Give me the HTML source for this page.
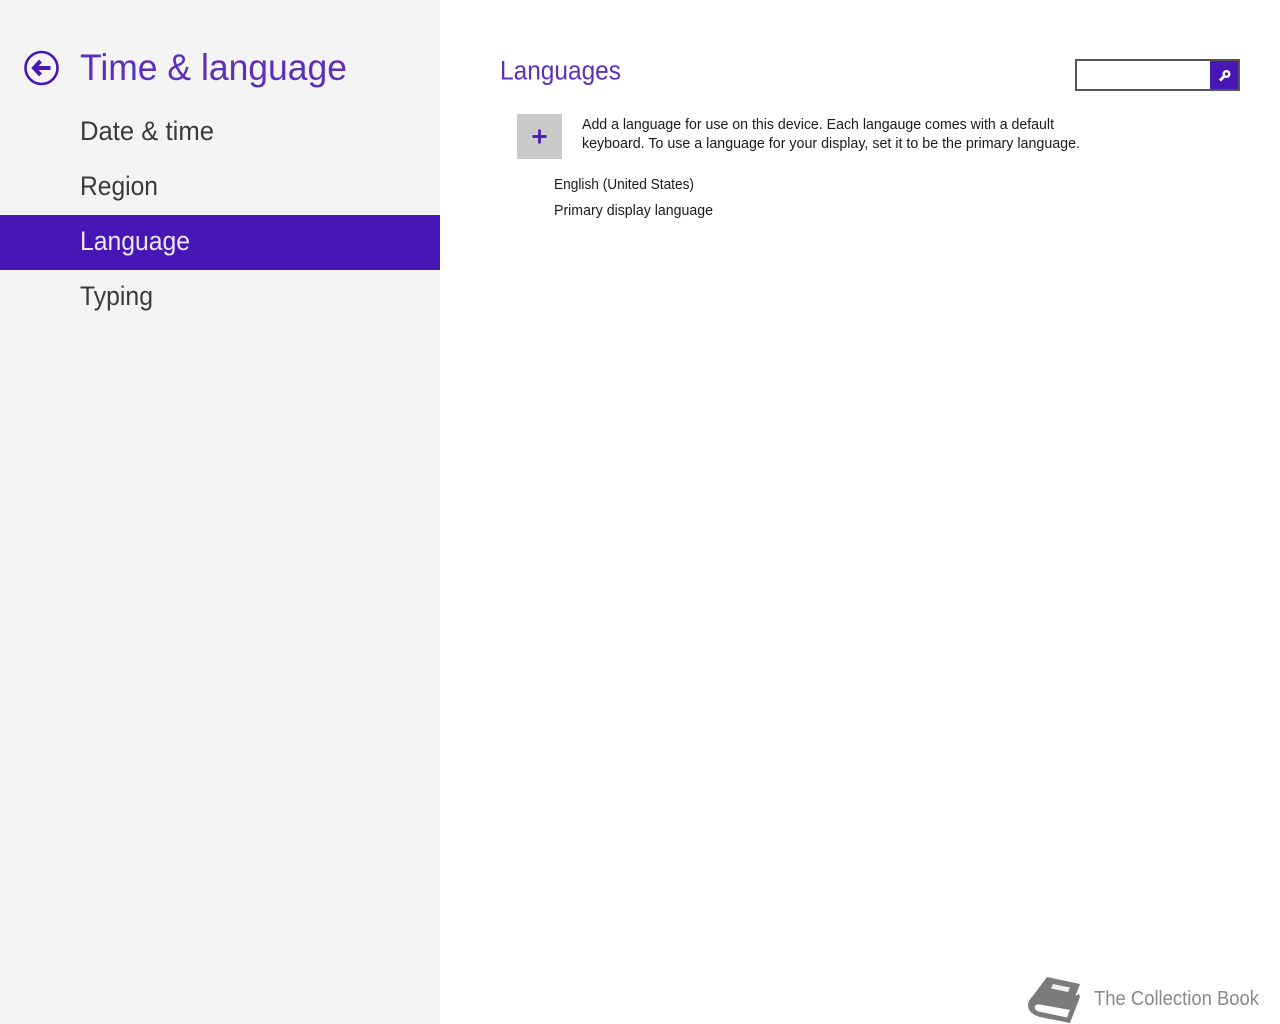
<!DOCTYPE html>
<html lang="en"><head><meta charset="utf-8"><title>Time &amp; language</title>
<style>
html,body{margin:0;padding:0;background:#fff;width:1280px;height:1024px;overflow:hidden}
svg{display:block}
text{font-family:"Liberation Sans",sans-serif}
</style></head><body>
<svg width="1280" height="1024" viewBox="0 0 1280 1024" xmlns="http://www.w3.org/2000/svg">
<rect width="1280" height="1024" fill="#fff"/>
<rect width="440" height="1024" fill="#f4f4f4"/>
<rect y="215" width="440" height="55" fill="#4617b4"/>

<circle cx="41.500" cy="68" r="16" fill="none" stroke="#4617b4" stroke-width="2.600"/>
<path d="M40.500 61L34 68L40.500 75M35 68H50.500" fill="none" stroke="#4617b4" stroke-width="4"/>

<text x="80" y="80" font-size="37" fill="#5a30bc" textLength="267" lengthAdjust="spacingAndGlyphs">Time &amp; language</text>
<text x="80" y="140" font-size="27" fill="#3a3a3a" textLength="134" lengthAdjust="spacingAndGlyphs">Date &amp; time</text>
<text x="80" y="195" font-size="27" fill="#3a3a3a" textLength="78" lengthAdjust="spacingAndGlyphs">Region</text>
<text x="80" y="250" font-size="27" fill="#efe6ff" textLength="110" lengthAdjust="spacingAndGlyphs">Language</text>
<text x="80" y="305" font-size="27" fill="#3a3a3a" textLength="73" lengthAdjust="spacingAndGlyphs">Typing</text>

<text x="500" y="79.500" font-size="27" fill="#5a30bc" textLength="121" lengthAdjust="spacingAndGlyphs">Languages</text>

<rect x="1076" y="60" width="163" height="30" fill="#fff" stroke="#555" stroke-width="2"/>
<rect x="1210" y="61" width="28" height="28" fill="#4617b4"/>
<circle cx="1226.500" cy="74" r="2.800" fill="none" stroke="#fff" stroke-width="2.400"/>
<path d="M1224 76.500L1220 80.500" stroke="#fff" stroke-width="2.800" fill="none"/>

<rect x="517" y="114" width="45" height="45" fill="#cacaca"/>
<path d="M539.500 129.500V143.500M532.500 136.500H546.500" stroke="#4617b4" stroke-width="2.700" fill="none"/>

<text x="582" y="129" font-size="14.500" fill="#1a1a1a" textLength="472" lengthAdjust="spacingAndGlyphs">Add a language for use on this device. Each langauge comes with a default</text>
<text x="582" y="148" font-size="14.500" fill="#1a1a1a" textLength="498" lengthAdjust="spacingAndGlyphs">keyboard. To use a language for your display, set it to be the primary language.</text>
<text x="554" y="189" font-size="14.500" fill="#1a1a1a" textLength="140" lengthAdjust="spacingAndGlyphs">English (United States)</text>
<text x="554" y="215" font-size="14.500" fill="#1a1a1a" textLength="159" lengthAdjust="spacingAndGlyphs">Primary display language</text>

<path d="M1047 977L1080 984L1070 1010L1040 1004.500C1036 1004 1034 1006 1035 1008.500C1036 1010.500 1038 1011.500 1041 1012L1067 1017.500L1075 996L1079 994L1080 997L1070 1023L1040 1017C1033 1015 1028 1011 1028 1005C1028 1002 1030 999 1032 997Z" fill="#7b7b7b"/>
<path d="M1053 984L1070 987.500L1068 992L1051 988.500Z" fill="#f0f0f0"/>
<text x="1094" y="1005" font-size="20" fill="#8a8a8a" textLength="165" lengthAdjust="spacingAndGlyphs">The Collection Book</text>
</svg>
</body></html>
